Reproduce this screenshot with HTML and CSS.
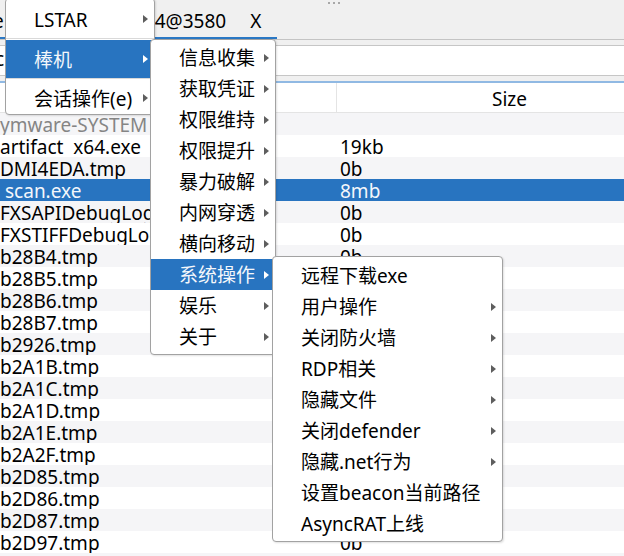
FILE: index.html
```html
<!DOCTYPE html>
<html>
<head>
<meta charset="utf-8">
<link rel="stylesheet" href="styles.css">
</head>
<body>
<div class="app">
  <div class="tabbar">
    <div class="tab"><span class="tab-cut">e</span><span class="tab-title">4@3580</span><span class="tab-close">X</span></div>
    <div class="grip"><i></i><i></i><i></i></div>
  </div>
  <div class="band"></div>
  <div class="input"><span class="input-text">c</span></div>
  <div class="band"></div>
  <div class="table">
    <div class="thead"><div class="th th-name"></div><div class="th th-size">Size</div></div>
    <div class="row alt"><div class="c-name muted">ymware-SYSTEM</div><div class="c-size"></div></div>
    <div class="row"><div class="c-name">artifact&nbsp; x64.exe</div><div class="c-size">19kb</div></div>
    <div class="row alt"><div class="c-name">DMI4EDA.tmp</div><div class="c-size">0b</div></div>
    <div class="row sel"><div class="c-name indent">scan.exe</div><div class="c-size">8mb</div></div>
    <div class="row alt"><div class="c-name">FXSAPIDebugLog</div><div class="c-size">0b</div></div>
    <div class="row"><div class="c-name">FXSTIFFDebugLog</div><div class="c-size">0b</div></div>
    <div class="row alt"><div class="c-name">b28B4.tmp</div><div class="c-size">0b</div></div>
    <div class="row"><div class="c-name">b28B5.tmp</div><div class="c-size"></div></div>
    <div class="row alt"><div class="c-name">b28B6.tmp</div><div class="c-size"></div></div>
    <div class="row"><div class="c-name">b28B7.tmp</div><div class="c-size"></div></div>
    <div class="row alt"><div class="c-name">b2926.tmp</div><div class="c-size"></div></div>
    <div class="row"><div class="c-name">b2A1B.tmp</div><div class="c-size"></div></div>
    <div class="row alt"><div class="c-name">b2A1C.tmp</div><div class="c-size"></div></div>
    <div class="row"><div class="c-name">b2A1D.tmp</div><div class="c-size"></div></div>
    <div class="row alt"><div class="c-name">b2A1E.tmp</div><div class="c-size"></div></div>
    <div class="row"><div class="c-name">b2A2F.tmp</div><div class="c-size"></div></div>
    <div class="row alt"><div class="c-name">b2D85.tmp</div><div class="c-size"></div></div>
    <div class="row"><div class="c-name">b2D86.tmp</div><div class="c-size"></div></div>
    <div class="row alt"><div class="c-name">b2D87.tmp</div><div class="c-size"></div></div>
    <div class="row"><div class="c-name">b2D97.tmp</div><div class="c-size">0b</div></div>
    <div class="row alt"><div class="c-name"></div><div class="c-size"></div></div>
  </div>

  <div class="menu menu1">
    <div class="mi mi-tall">LSTAR<b class="arr"></b></div>
    <div class="msep"></div>
    <div class="mi mi-tall active">棒机<b class="arr"></b></div>
    <div class="msep"></div>
    <div class="mi mi-tall">会话操作(e)<b class="arr"></b></div>
  </div>

  <div class="menu menu2">
    <div class="mi">信息收集<b class="arr"></b></div>
    <div class="mi">获取凭证<b class="arr"></b></div>
    <div class="mi">权限维持<b class="arr"></b></div>
    <div class="mi">权限提升<b class="arr"></b></div>
    <div class="mi">暴力破解<b class="arr"></b></div>
    <div class="mi">内网穿透<b class="arr"></b></div>
    <div class="mi">横向移动<b class="arr"></b></div>
    <div class="mi active">系统操作<b class="arr"></b></div>
    <div class="mi">娱乐<b class="arr"></b></div>
    <div class="mi">关于<b class="arr"></b></div>
  </div>

  <div class="menu menu3">
    <div class="mi">远程下载exe</div>
    <div class="mi">用户操作<b class="arr"></b></div>
    <div class="mi">关闭防火墙<b class="arr"></b></div>
    <div class="mi">RDP相关<b class="arr"></b></div>
    <div class="mi">隐藏文件<b class="arr"></b></div>
    <div class="mi">关闭defender<b class="arr"></b></div>
    <div class="mi">隐藏.net行为<b class="arr"></b></div>
    <div class="mi">设置beacon当前路径</div>
    <div class="mi">AsyncRAT上线</div>
  </div>
</div>
</body>
</html>
```

FILE: styles.css
```css
* { box-sizing: border-box; }
html, body { margin: 0; padding: 0; }
body {
  width: 624px;
  height: 556px;
  overflow: hidden;
  background: #ffffff;
  font-family: "Noto Sans", "Noto Sans CJK SC", sans-serif;
  font-size: 19px;
  color: #000;
}
.app {
  position: relative;
  width: 624px;
  height: 556px;
  overflow: hidden;
  display: flex;
  flex-direction: column;
}

/* top tab bar */
.tabbar {
  position: relative;
  flex: 0 0 40px;
  height: 40px;
  background: #f0f0f0;
  border-bottom: 1px solid #c4c4c4;
}
.tab {
  width: 277px;
  height: 39px;
  border-bottom: 2px solid #2b78c4;
  display: flex;
  align-items: center;
  padding-top: 5px;
  line-height: 30px;
  white-space: nowrap;
}
.tab-cut { margin-left: -7px; }
.tab-title { margin-left: 151px; }
.tab-close { margin-left: 24px; }
.grip {
  position: absolute;
  left: 328px;
  top: 2px;
  display: flex;
  gap: 3px;
}
.grip i {
  display: block;
  width: 2px;
  height: 2px;
  background: #a8a8a8;
}

.band {
  flex: 0 0 5px;
  height: 5px;
  background: #f0f0f0;
}
.input {
  flex: 0 0 31px;
  height: 31px;
  background: #fff;
  border-top: 1px solid #c6c6c6;
  border-bottom: 1px solid #c6c6c6;
  line-height: 27px;
  overflow: hidden;
  white-space: nowrap;
}
.input-text { display: inline-block; margin-left: -5px; }

/* table */
.table {
  flex: 1 1 auto;
  display: flex;
  flex-direction: column;
  overflow: hidden;
}
.thead {
  flex: 0 0 32px;
  display: grid;
  grid-template-columns: 337px 1fr;
  border-top: 2px solid #90b9e3;
  border-bottom: 1px solid #e4e4e4;
  background: #fff;
}
.th { line-height: 33px; height: 29px; white-space: nowrap; overflow: hidden; }
.th-name { border-right: 1px solid #e4e4e4; }
.th-size { padding-left: 155px; }

.row {
  flex: 0 0 22px;
  height: 22px;
  display: grid;
  grid-template-columns: 337px 1fr;
  line-height: 24px;
  white-space: nowrap;
  background: #fff;
}
.row.alt { background: #f5f5f7; }
.row.sel { background: #2874c0; color: #f4f7fb; }
.c-name { overflow: hidden; height: 22px; }
.c-size { padding-left: 3px; height: 22px; }
.muted { color: #858585; }
.indent { padding-left: 5px; }

/* popup menus */
.menu {
  position: absolute;
  background: #fff;
  border: 1px solid #a2a2a2;
  border-radius: 4px;
  box-shadow: 1px 1px 2px rgba(0, 0, 0, 0.12);
  white-space: nowrap;
}
.menu1 {
  left: 5px;
  top: -2px;
  width: 150px;
  height: 117px;
  z-index: 1;
  padding-top: 1px;
}
.menu2 {
  left: 150px;
  top: 39px;
  width: 126px;
  height: 316px;
  padding: 2px 0;
  z-index: 2;
}
.menu3 {
  left: 272px;
  top: 256px;
  width: 231px;
  height: 286px;
  padding: 3px 0 2px;
  z-index: 3;
}
.mi {
  position: relative;
  height: 31px;
  line-height: 32px;
  padding-left: 28px;
}
.mi-tall {
  height: 38px;
  line-height: 40px;
}
.menu1 .mi:last-child { height: 35px; line-height: 38px; }
.msep {
  height: 2px;
  border-top: 1px solid #d9d9d9;
}
.mi.active {
  background: #2874c0;
  color: #f4f7fb;
}
.arr {
  position: absolute;
  right: 6px;
  top: 50%;
  margin-top: -4px;
  width: 0;
  height: 0;
  border-left: 5px solid #5e5e5e;
  border-top: 4px solid transparent;
  border-bottom: 4px solid transparent;
}
.mi.active .arr { border-left-color: #ffffff; }
```
